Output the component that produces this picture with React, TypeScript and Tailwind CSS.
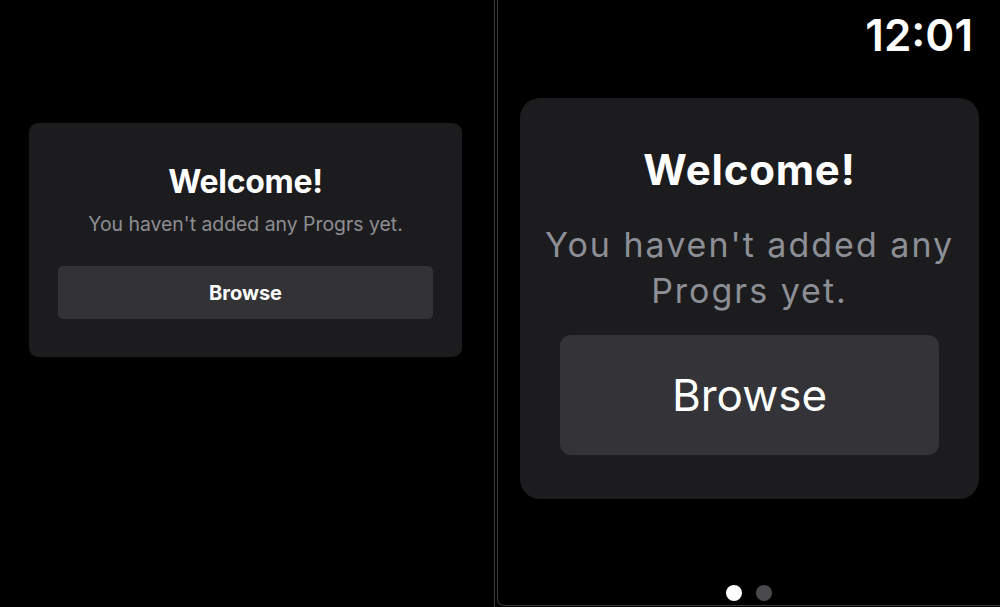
const font = "font-['Inter','Liberation_Sans',sans-serif]";

const PhoneCard = () => (
  <div className="flex w-[433px] flex-col items-center rounded-[9px] bg-[#1c1c1e] px-[29px] pb-[38px] pt-[40px]">
    <h1 className="text-[32px] font-bold leading-[38px] tracking-[-0.3px] text-white">Welcome!</h1>
    <p className="mt-[10px] text-[19.4px] leading-[26px] text-[#8e8e93]">You haven't added any Progrs yet.</p>
    <button className="mt-[29px] h-[53px] w-full rounded-[5px] bg-[#333335] text-[20px] font-bold text-white">
      Browse
    </button>
  </div>
);

const WatchCard = () => (
  <div className="ml-[22px] mr-[21px] flex flex-col items-center rounded-[20px] bg-[#1c1c1e] px-[40px] pb-[44px] pt-[47px]">
    <h1 className="text-[42px] font-bold leading-[50px] tracking-[0.8px] text-white">Welcome!</h1>
    <p className="mt-[27px] whitespace-nowrap text-center text-[34px] leading-[46px] tracking-[2px] text-[#8d8f96]">
      You haven't added any
      <br />
      Progrs yet.
    </p>
    <button className="mt-[21px] h-[120px] w-full rounded-[11px] bg-[#333338] text-[44px] text-white">
      Browse
    </button>
  </div>
);

export default function App() {
  return (
    <div className={`flex h-[607px] w-[1000px] overflow-hidden bg-black ${font}`}>
      <div className="flex w-[494px] shrink-0 items-start pl-[29px] pt-[123px]">
        <PhoneCard />
      </div>
      <div className="w-px shrink-0 bg-[#3c3c3c]" />
      <div className="ml-[2px] flex h-[606px] min-w-0 flex-1 flex-col rounded-bl-[7px] border-b border-l border-[#3a3a3a]">
        <div className="flex justify-end pr-[27px] pt-[10px]">
          <span className="text-[44px] font-semibold leading-[50px] text-white">12:01</span>
        </div>
        <div className="mt-[38px]">
          <WatchCard />
        </div>
        <div className="mt-auto flex justify-center gap-[14px] pb-[4px]">
          <span className="h-[16px] w-[16px] rounded-full bg-white" />
          <span className="h-[16px] w-[16px] rounded-full bg-[#4a4a4c]" />
        </div>
      </div>
    </div>
  );
}
